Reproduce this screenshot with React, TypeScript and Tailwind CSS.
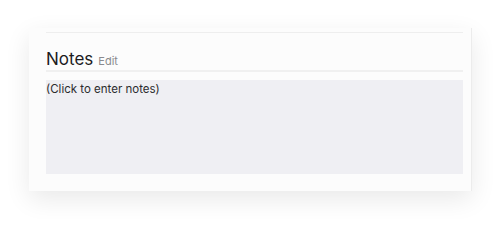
import React from 'react'

export default function App() {
  return (
    <div className="h-[219px] w-full bg-white pl-[29px] pt-[28px]" style={{ fontFamily: 'Inter, "Noto Sans", sans-serif' }}>
      <div className="w-[443px] bg-[#fcfcfc] pl-[17px] pr-[8px] pt-[4px] pb-[17px] border-r border-[#ececec] shadow-[0_8px_24px_rgba(0,0,0,0.09)]">
        {/* top rule */}
        <div className="border-t border-[#eeeeee]" />

        {/* heading */}
        <div className="flex items-baseline pt-[17px] border-b-2 border-[#f0f0f0]">
          <h2 className="text-[17px] leading-[18px] font-normal text-[#1c1c1e]">Notes</h2>
          <button className="ml-[5px] text-[11px] leading-[18px] text-[#8a8a8e]">Edit</button>
        </div>

        {/* notes area */}
        <div className="mt-[8px] h-[94px] bg-[#efeff3] pt-[1px] text-[11.5px] leading-[16px] text-[#2c2c2e] cursor-text">
          (Click to enter notes)
        </div>
      </div>
    </div>
  )
}
